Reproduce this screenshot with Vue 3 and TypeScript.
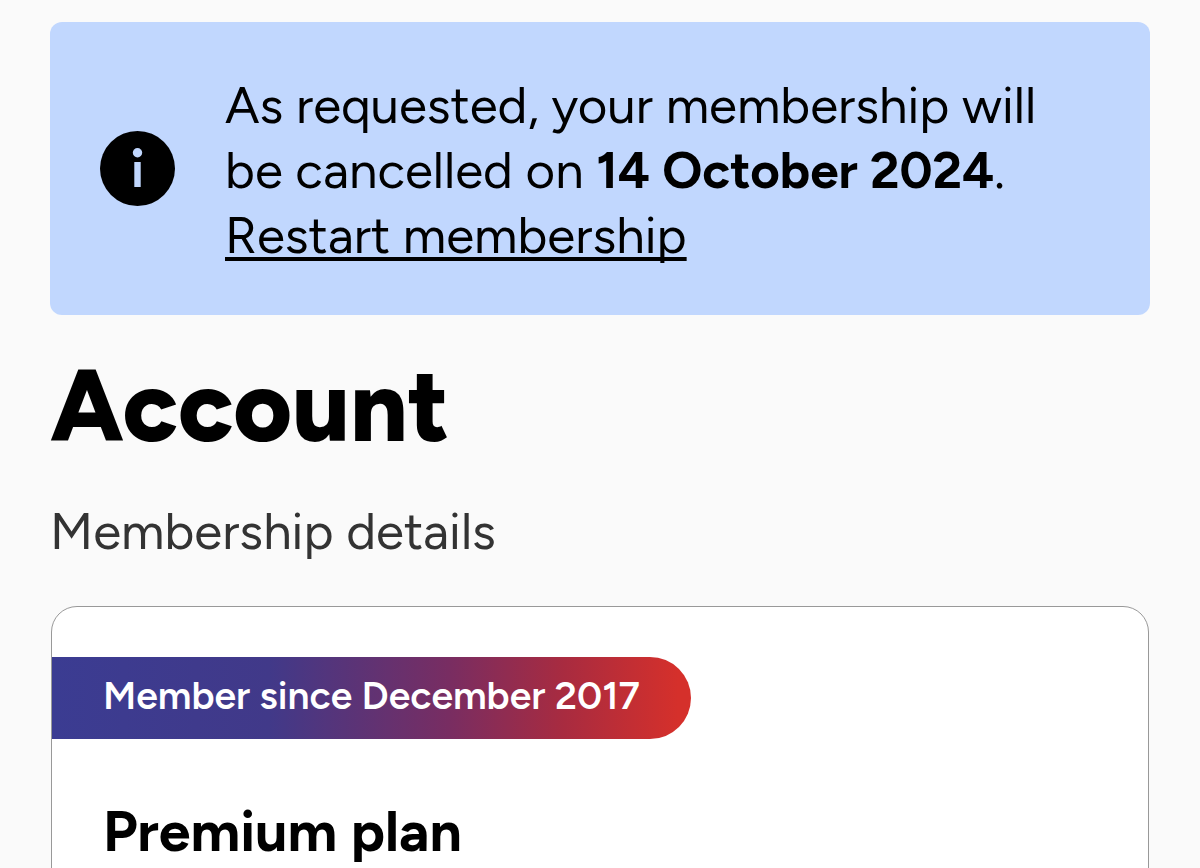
<script setup lang="ts">
const restartHref = '#restart'
</script>

<template>
  <main class="page">
    <section class="notice">
      <svg class="notice-icon" viewBox="0 0 75 75" aria-hidden="true">
        <circle cx="37.5" cy="37.5" r="37.5" fill="#000" />
        <circle cx="37.5" cy="21.7" r="4.7" fill="#c1d7fe" />
        <path d="M34.300 31H40.700V56H34.300Z" fill="#c1d7fe" />
      </svg>
      <p class="notice-text">
        <span class="line">As requested, your membership will</span>
        <span class="line">be cancelled on <strong>14 October 2024</strong>.</span>
        <a :href="restartHref">Restart membership</a>
      </p>
    </section>
    <h1>Account</h1>
    <h2>Membership details</h2>
    <section class="card">
      <p class="badge">Member since December 2017</p>
      <h3>Premium plan</h3>
    </section>
  </main>
</template>

<style>
body {
  background: #fafafa;
  overflow: hidden;
}
</style>

<style scoped>
.page {
  padding: 22px 50px 0;
  font-family: Figtree, Lato, "Noto Sans", sans-serif;
  color: #000;
}
.notice {
  display: flex;
  align-items: center;
  gap: 50px;
  padding: 47px 50px;
  background: #c1d7fe;
  border-radius: 12px;
}
.notice-icon {
  flex: none;
  width: 75px;
  height: 75px;
}
.notice-text {
  margin: 0;
  padding-top: 4px;
  font-size: 51px;
  line-height: 65px;
  font-weight: 430;
}
.line {
  display: block;
}
strong {
  font-weight: 700;
}
a {
  color: inherit;
  text-decoration-thickness: 4px;
  text-underline-offset: 4px;
  text-decoration-skip-ink: none;
}
h1 {
  margin: 31px 0 0;
  font-size: 101px;
  line-height: 120px;
  font-weight: 800;
}
h2 {
  margin: 34px 0 0;
  font-size: 51px;
  line-height: 64px;
  font-weight: 430;
  color: #333;
}
.card {
  margin: 42px 1px 0;
  padding: 50px 0;
  background: #fff;
  border: 1px solid #999;
  border-radius: 26px;
}
.badge {
  width: fit-content;
  margin: 0;
  padding: 0 51px 4px;
  font-size: 39px;
  line-height: 78px;
  font-weight: 650;
  color: #fff;
  background: linear-gradient(90deg, #3b3c92 0%, #413989 34%, #782d62 62%, #a82b40 80%, #d5302b 98%);
  border-radius: 0 41px 41px 0;
}
h3 {
  margin: 56px 51px 0;
  font-size: 57px;
  line-height: 72px;
  font-weight: 700;
}
</style>
